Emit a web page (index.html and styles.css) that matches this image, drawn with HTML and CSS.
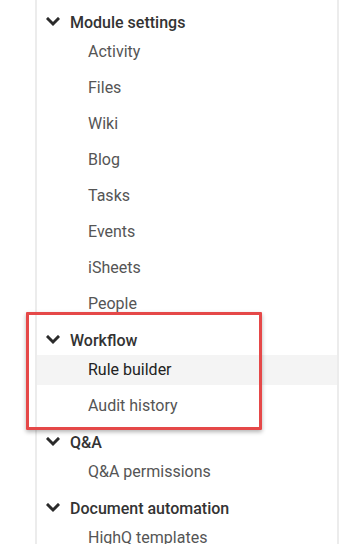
FILE: index.html
```html
<!DOCTYPE html>
<html lang="en">
<head>
    <meta charset="UTF-8">
    <meta name="viewport" content="width=device-width, initial-scale=1.0">
    <title>Site admin menu</title>
    <link rel="stylesheet" href="styles.css">
</head>
<body>
    <div class="page">
        <nav class="menu">
            <div class="group">
                <div class="group-title">
                    <svg class="chevron" viewBox="0 0 14 10"><polyline points="2,2 7,7 12,2"/></svg>
                    <span>Module settings</span>
                </div>
                <ul>
                    <li>Activity</li>
                    <li>Files</li>
                    <li>Wiki</li>
                    <li>Blog</li>
                    <li>Tasks</li>
                    <li>Events</li>
                    <li>iSheets</li>
                    <li>People</li>
                </ul>
            </div>

            <div class="group">
                <div class="group-title">
                    <svg class="chevron" viewBox="0 0 14 10"><polyline points="2,2 7,7 12,2"/></svg>
                    <span>Workflow</span>
                </div>
                <ul>
                    <li class="active">Rule builder</li>
                    <li>Audit history</li>
                </ul>
            </div>

            <div class="group">
                <div class="group-title">
                    <svg class="chevron" viewBox="0 0 14 10"><polyline points="2,2 7,7 12,2"/></svg>
                    <span>Q&amp;A</span>
                </div>
                <ul>
                    <li>Q&amp;A permissions</li>
                </ul>
            </div>

            <div class="group">
                <div class="group-title">
                    <svg class="chevron" viewBox="0 0 14 10"><polyline points="2,2 7,7 12,2"/></svg>
                    <span>Document automation</span>
                </div>
                <ul>
                    <li>HighQ templates</li>
                </ul>
            </div>
        </nav>

        <div class="highlight-box"></div>
    </div>
</body>
</html>
```

FILE: styles.css
```css
body {
    font-family: Roboto, "Liberation Sans", sans-serif;
    margin: 0;
    padding: 0;
    background: #fff;
    overflow: hidden;
}

.page {
    position: relative;
    height: 544px;
}

.menu {
    margin-left: 35px;
    width: 300px;
    height: 100%;
    border-left: 2px solid #ececec;
    border-right: 2px solid #ececec;
    padding-top: 13px;
    box-sizing: content-box;
}

.group {
    margin-bottom: 12px;
}

.group-title {
    display: flex;
    align-items: center;
    height: 18px;
    font-size: 16px;
    font-weight: 500;
    color: #333;
}

.chevron {
    width: 14px;
    height: 10px;
    margin-left: 9px;
    margin-right: 10px;
    fill: none;
    stroke: #2b2b2b;
    stroke-width: 3;
    stroke-linecap: square;
}

.group ul {
    list-style: none;
    margin: 0;
    padding: 0;
}

.group li {
    height: 30px;
    line-height: 30px;
    margin-top: 6px;
    padding-left: 51px;
    font-size: 16px;
    color: #555;
}

.group li.active {
    background: #f4f4f4;
    color: #222;
}

.highlight-box {
    position: absolute;
    left: 26px;
    top: 312px;
    width: 230px;
    height: 112px;
    border: 3px solid #e54848;
    border-radius: 1px;
    box-shadow: 0 2px 4px rgba(0, 0, 0, 0.3);
}
```
